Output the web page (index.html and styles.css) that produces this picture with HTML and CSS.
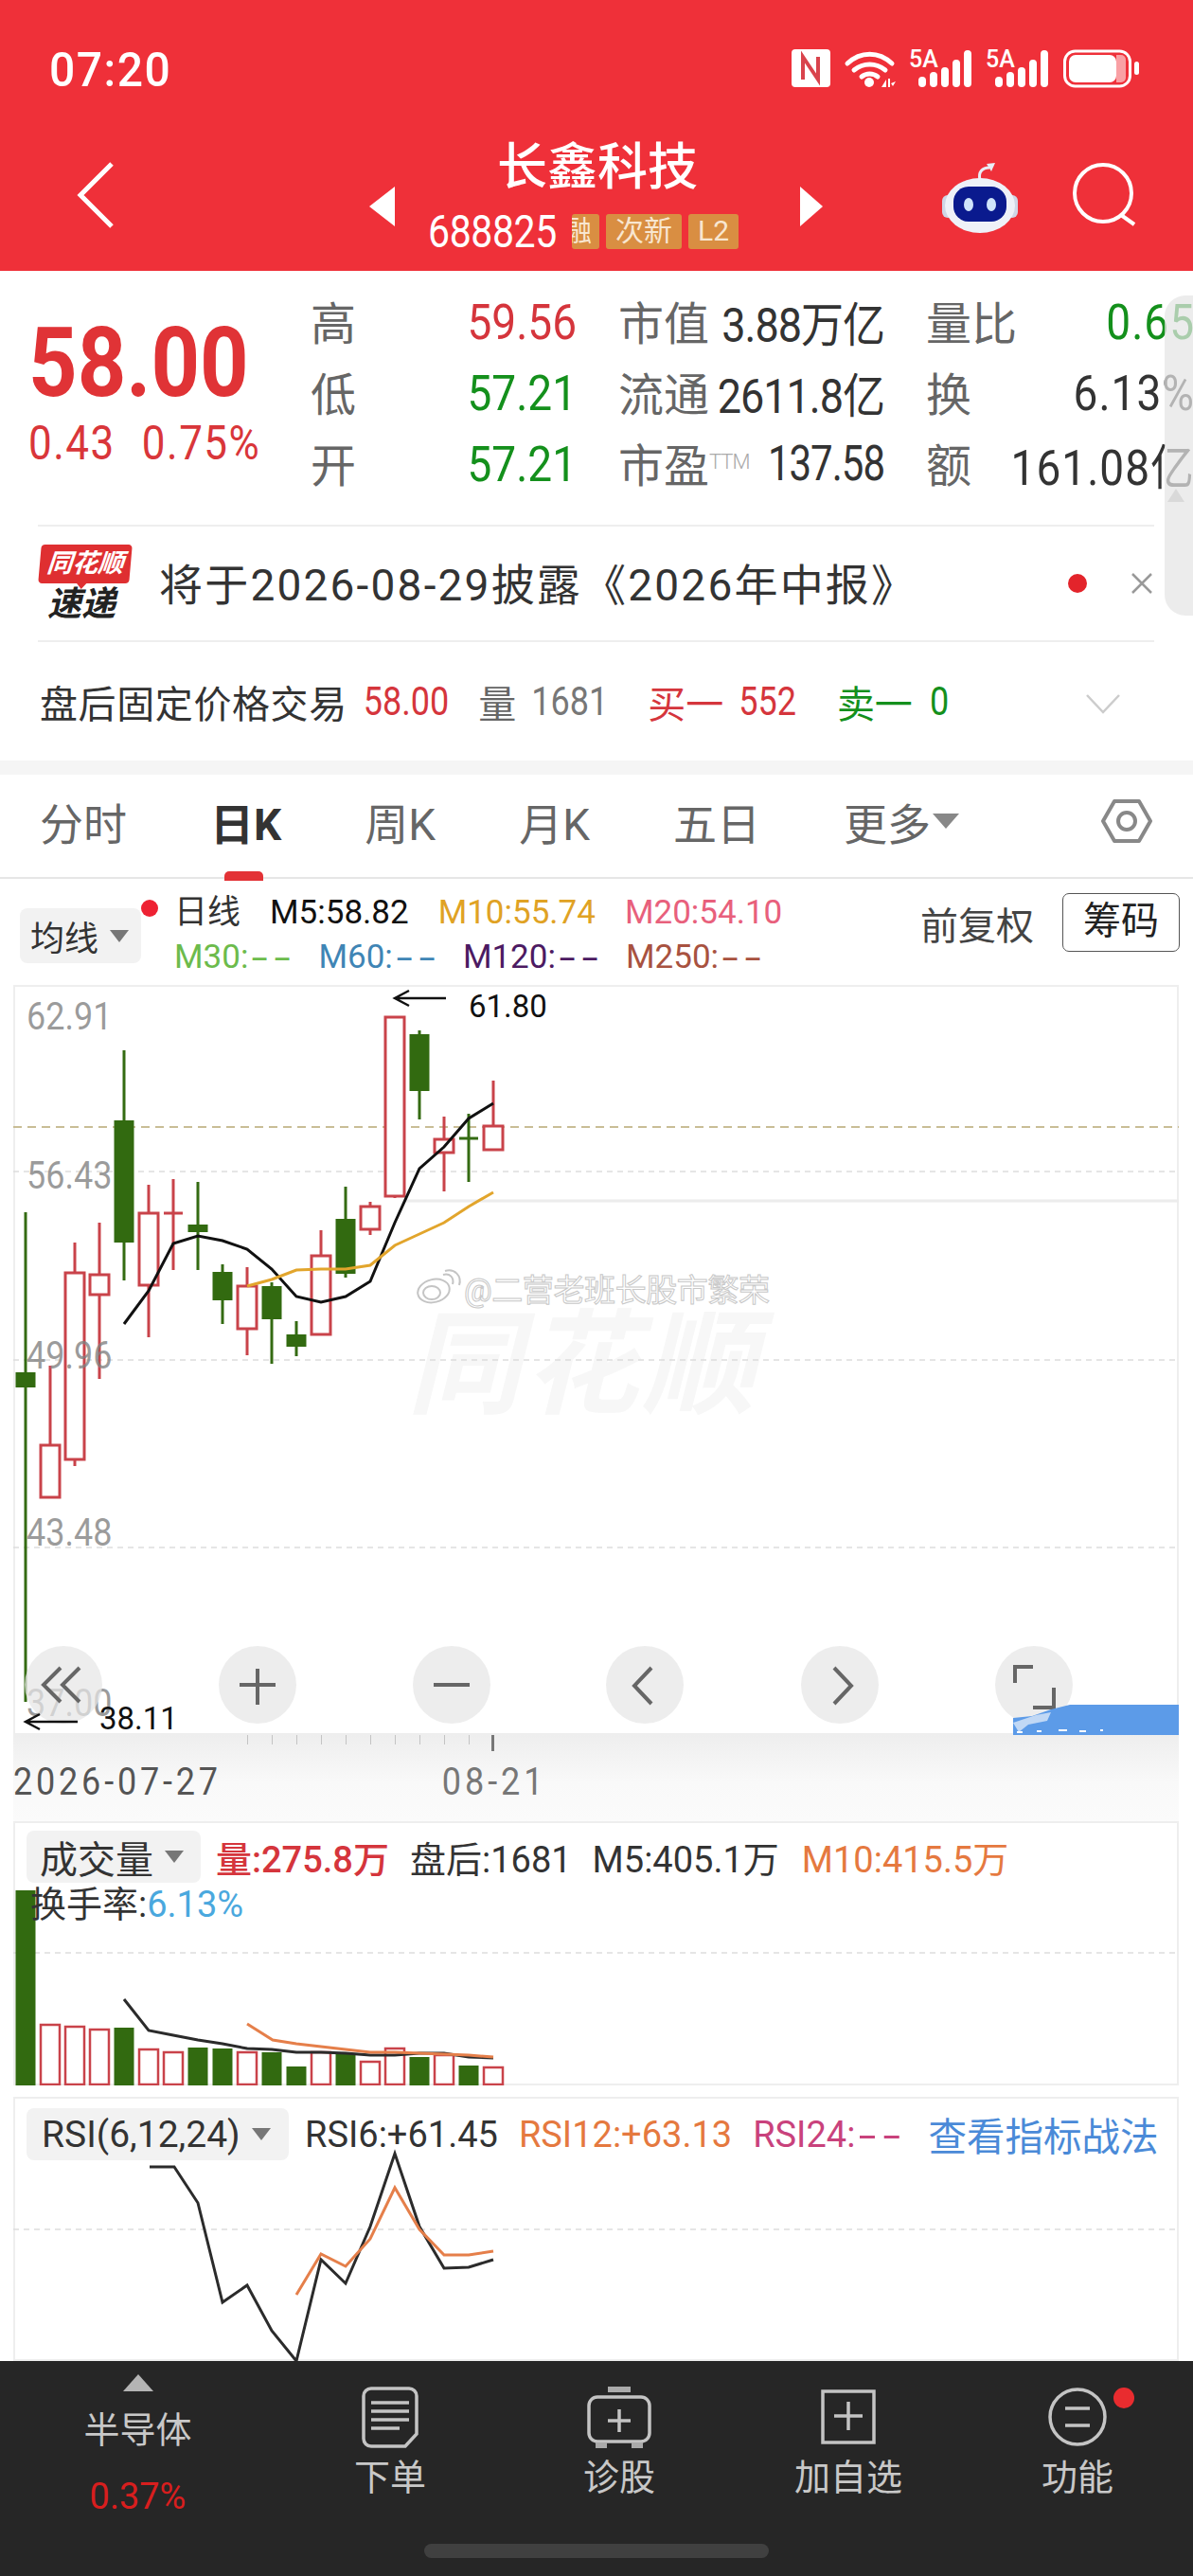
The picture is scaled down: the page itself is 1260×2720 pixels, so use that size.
FILE: index.html
```html
<!DOCTYPE html>
<html lang="zh-CN">
<head>
  <meta charset="UTF-8">
  <title>长鑫科技 688825</title>
  <link rel="stylesheet" href="styles.css">
</head>
<body>
<div class="phone">

  <header class="top">
    <div class="status">
      <span class="clock">07:20</span>
      <svg class="status-icons" viewBox="836 50 370 50" width="370" height="50">
        <rect x="836" y="54" width="41" height="40" rx="4" fill="#fff"/>
        <path d="M848 86V62l16 24V62" fill="none" stroke="#d9434c" stroke-width="4"/>
        <g fill="none" stroke="#fff" stroke-width="5" stroke-linecap="round">
          <path d="M895 69c14-13 33-13 47 0"/>
          <path d="M902 76c10-8 23-8 33 0"/>
          <path d="M910 83c5-4 12-4 17 0"/>
        </g>
        <circle cx="918" cy="89" r="5" fill="#fff"/>
        <path d="M931 94l5-8v8zM938 85h2v9h-2zM941 90l5-2-3 5z" fill="#fff"/>
        <text x="960" y="73" class="net">5A</text>
        <text x="1041" y="73" class="net">5A</text>
        <g stroke="#fff" stroke-width="8" stroke-linecap="round">
          <path d="M974 87v3M986 82v8M998 77v13M1010 69v21M1022 59v31"/>
          <path d="M1055 87v3M1067 82v8M1079 77v13M1091 69v21M1103 59v31"/>
        </g>
        <rect x="1124.500" y="56" width="69" height="37" rx="11" fill="none" stroke="#fff" stroke-width="3"/>
        <rect x="1129" y="60" width="50" height="29" rx="7" fill="#fff"/>
        <path d="M1179 60h5a5 5 0 0 1 5 5v19a5 5 0 0 1-5 5h-5z" fill="#f9a0a4"/>
        <rect x="1198" y="67" width="5" height="14" rx="2.500" fill="#fff"/>
      </svg>
    </div>
    <div class="nav">
      <svg class="nav-back" viewBox="0 0 44 72" width="44" height="72">
        <path d="M38 3L5 36l33 33" fill="none" stroke="#fff" stroke-width="5"/>
      </svg>
      <div class="nav-center">
        <i class="arrow-left"></i>
        <div class="stock">
          <div class="stock-name">长鑫科技</div>
          <div class="stock-code">
            <span class="code">688825</span>
            <span class="tag tag-cut"><b>融</b></span>
            <span class="tag">次新</span>
            <span class="tag">L2</span>
          </div>
        </div>
        <i class="arrow-right"></i>
      </div>
      <div class="nav-right">
        <svg viewBox="993 168 84 76" width="84" height="76">
          <path d="M1034 188c-2-8 2-13 10-13" fill="none" stroke="#e9edf6" stroke-width="3"/>
          <path d="M1050 170l-9 1 5 8z" fill="#e9edf6"/>
          <rect x="994" y="204" width="12" height="24" rx="6" fill="#cfd6e6"/>
          <rect x="1062" y="204" width="12" height="24" rx="6" fill="#cfd6e6"/>
          <ellipse cx="1034" cy="215" rx="37" ry="29" fill="#eef1f8"/>
          <rect x="1006" y="195" width="56" height="37" rx="16" fill="#0a1a8e"/>
          <ellipse cx="1022" cy="214" rx="5" ry="7" fill="#cfe4fb"/>
          <ellipse cx="1046" cy="214" rx="5" ry="7" fill="#cfe4fb"/>
        </svg>
        <svg viewBox="1130 172 70 70" width="70" height="70">
          <circle cx="1164" cy="206" r="30" fill="none" stroke="#fff" stroke-width="4"/>
          <path d="M1183 229l14 10" stroke="#fff" stroke-width="4"/>
        </svg>
      </div>
    </div>
  </header>

  <section class="quote">
    <div class="price-box">
      <div class="price">58.00</div>
      <div class="change"><span>0.43</span><span>0.75%</span></div>
    </div>
    <div class="stats">
      <div class="stat"><span class="stat-key">高</span><span class="stat-val red">59.56</span></div>
      <div class="stat"><span class="stat-key">市值</span><span class="stat-val">3.88万亿</span></div>
      <div class="stat"><span class="stat-key">量比</span><span class="stat-val green">0.65</span></div>
      <div class="stat"><span class="stat-key">低</span><span class="stat-val green">57.21</span></div>
      <div class="stat"><span class="stat-key">流通</span><span class="stat-val">2611.8亿</span></div>
      <div class="stat"><span class="stat-key">换</span><span class="stat-val">6.13%</span></div>
      <div class="stat"><span class="stat-key">开</span><span class="stat-val green">57.21</span></div>
      <div class="stat"><span class="stat-key">市盈<sup class="ttm">TTM</sup></span><span class="stat-val">137.58</span></div>
      <div class="stat"><span class="stat-key">额</span><span class="stat-val">161.08亿</span></div>
    </div>
  </section>

  <section class="notice">
    <div class="brand">
      <div class="brand-top">同花顺</div>
      <div class="brand-sub">速递</div>
    </div>
    <div class="notice-text">将于2026-08-29披露《2026年中报》</div>
    <i class="notice-dot"></i>
    <svg class="notice-close" viewBox="0 0 26 26" width="26" height="26">
      <path d="M3 3l20 20M23 3L3 23" stroke="#999" stroke-width="2.500"/>
    </svg>
  </section>

  <section class="after-hours">
    <span class="ah-title">盘后固定价格交易</span>
    <span class="ah-num red">58.00</span>
    <span class="ah-key">量</span>
    <span class="ah-num gray">1681</span>
    <span class="ah-buy red">买一</span>
    <span class="ah-num red">552</span>
    <span class="ah-sell green">卖一</span>
    <span class="ah-num green">0</span>
    <svg class="ah-more" viewBox="0 0 38 22" width="38" height="22">
      <path d="M2 2l17 18L36 2" fill="none" stroke="#ccc" stroke-width="2.500"/>
    </svg>
  </section>

  <div class="band"></div>

  <nav class="tabs">
    <span class="tab">分时</span>
    <span class="tab active">日K</span>
    <span class="tab">周K</span>
    <span class="tab">月K</span>
    <span class="tab">五日</span>
    <span class="tab">更多<i class="tab-caret"></i></span>
    <svg class="tab-gear" viewBox="0 0 54 48" width="54" height="48">
      <path d="M14 3h26l12 21-12 21H14L2 24z" fill="none" stroke="#888" stroke-width="4" stroke-linejoin="round"/>
      <circle cx="27" cy="24" r="9" fill="none" stroke="#888" stroke-width="4"/>
    </svg>
  </nav>

  <div class="legend">
    <div class="pick pick-ma">均线<i class="caret"></i></div>
    <i class="legend-dot"></i>
    <div class="ma-lines">
      <div class="ma-row">
        <span class="ma-day">日线</span>
        <span class="c-m5">M5:58.82</span>
        <span class="c-m10">M10:55.74</span>
        <span class="c-m20">M20:54.10</span>
      </div>
      <div class="ma-row">
        <span class="c-m30">M30:<span class="dash">--</span></span>
        <span class="c-m60">M60:<span class="dash">--</span></span>
        <span class="c-m120">M120:<span class="dash">--</span></span>
        <span class="c-m250">M250:<span class="dash">--</span></span>
      </div>
    </div>
    <span class="adjust">前复权</span>
    <span class="chips">筹码</span>
  </div>

  <div class="panel panel-k">
    <svg class="plot" viewBox="14 1039 1231 792" width="1231" height="792">
      <text x="430" y="1482" class="wm-big">同花顺</text>

      <path d="M14 1189H1245" class="grid-last"/>
      <path d="M14 1236H1245M14 1435H1245M14 1633H1245" class="grid"/>
      <path d="M428 1267H1245" stroke="#ececec" stroke-width="3"/>

      <path class="wick-up" d="M53 1441V1580M79 1311V1547M105 1290V1455M157 1250V1411M183 1244V1340M261 1337V1430M339 1298V1408M391 1268V1303M417 1073V1264M469 1178V1257M521 1140V1213M173 1280H193"/>
      <path class="wick-down" d="M27 1279V1796M131 1108V1351M209 1247V1340M235 1334V1397M287 1353V1439M313 1394V1431M365 1252V1348M443 1087V1181M495 1175V1247M485 1201H505"/>

      <g class="body-up">
        <rect x="43" y="1525" width="20" height="55"/>
        <rect x="69" y="1343" width="20" height="197"/>
        <rect x="95" y="1345" width="20" height="21"/>
        <rect x="147" y="1280" width="20" height="76"/>
        <rect x="251" y="1357" width="20" height="45"/>
        <rect x="329" y="1325" width="20" height="83"/>
        <rect x="381" y="1273" width="20" height="24"/>
        <rect x="407" y="1073" width="20" height="189"/>
        <rect x="459" y="1202" width="20" height="14"/>
        <rect x="511" y="1188" width="20" height="25"/>
      </g>
      <g class="body-down">
        <rect x="16.500" y="1448" width="21" height="16"/>
        <rect x="120.500" y="1182" width="21" height="129"/>
        <rect x="198.500" y="1292" width="21" height="8"/>
        <rect x="224.500" y="1342" width="21" height="30"/>
        <rect x="276.500" y="1357" width="21" height="35"/>
        <rect x="302.500" y="1408" width="21" height="13"/>
        <rect x="354.500" y="1286" width="21" height="58"/>
        <rect x="432.500" y="1091" width="21" height="60"/>
      </g>

      <text x="28" y="1087" class="axis-y">62.91</text>
      <text x="28" y="1255" class="axis-y">56.43</text>
      <text x="28" y="1445" class="axis-y">49.96</text>
      <text x="28" y="1632" class="axis-y">43.48</text>
      <text x="28" y="1812" class="axis-y">37.00</text>

      <polyline class="line-k" points="131,1397 157,1362 183,1312 209,1304 235,1309 261,1318 287,1339 313,1368 339,1374 365,1368 391,1352 417,1290 443,1233 469,1210 495,1180 521,1164"/>
      <polyline class="line-m10" points="261,1357 287,1350 313,1340 339,1339 365,1339 391,1335 417,1314 443,1302 469,1290 495,1273 521,1258"/>

      <path d="M471 1053H418m14-8l-15 8 15 8" class="pointer"/>
      <text x="495" y="1073" class="mark">61.80</text>

      <g class="wm-mark">
        <ellipse cx="458" cy="1362" rx="17" ry="12" transform="rotate(-14 458 1362)"/>
        <ellipse cx="456" cy="1364" rx="9" ry="7"/>
        <path d="M468 1345c7-2 12 3 10 10M470 1341c10-3 18 5 15 15"/>
      </g>
      <text x="490" y="1373" class="wm-text">@二营老班长股市繁荣</text>

      <g class="zoom-btn">
        <circle cx="67" cy="1778" r="41"/>
        <circle cx="272" cy="1778" r="41"/>
        <circle cx="477" cy="1778" r="41"/>
        <circle cx="681" cy="1778" r="41"/>
        <circle cx="887" cy="1778" r="41"/>
        <circle cx="1092" cy="1778" r="41"/>
      </g>
      <g class="zoom-ico">
        <path d="M64 1760l-18 18 18 18M84 1760l-18 18 18 18"/>
        <path d="M272 1761v38M253 1778h38"/>
        <path d="M458 1778h38"/>
        <path d="M688 1760l-18 19 18 19"/>
        <path d="M881 1760l18 19-18 19"/>
        <path d="M1072 1776v-17h19M1113 1781v21h-22"/>
      </g>

      <path d="M82 1817H28m14-8l-15 8 15 8" class="pointer"/>
      <text x="105" y="1825" class="mark">38.11</text>

      <path class="patch" d="M1070 1831v-18l20-2 20-7 20-5h116v32z"/>
      <path d="M1070 1818l24-8 16-3-4 9-20 4-10 8z" fill="#dbe7f7" opacity=".8"/>
      <path d="M1074 1828h6M1095 1827h5M1118 1826h9M1140 1827h7M1162 1826h3" stroke="#fff" stroke-width="2"/>
    </svg>
  </div>

  <div class="time-axis">
    <i class="ticks"></i>
    <i class="tick-major"></i>
    <span class="date-start">2026-07-27</span>
    <span class="date-end">08-21</span>
  </div>

  <div class="panel panel-vol">
    <svg class="plot" viewBox="14 1922 1231 279" width="1231" height="279">
      <path d="M14 2061H1245" class="grid"/>
      <g class="body-down">
        <rect x="16.500" y="1995" width="21" height="206"/>
        <rect x="120.500" y="2140" width="21" height="61"/>
        <rect x="198.500" y="2161" width="21" height="40"/>
        <rect x="224.500" y="2162" width="21" height="39"/>
        <rect x="276.500" y="2166" width="21" height="35"/>
        <rect x="302.500" y="2181" width="21" height="20"/>
        <rect x="354.500" y="2168" width="21" height="33"/>
        <rect x="432.500" y="2171" width="21" height="30"/>
        <rect x="484.500" y="2180" width="21" height="21"/>
      </g>
      <g class="body-up thin">
        <rect x="43" y="2137" width="20" height="63"/>
        <rect x="69" y="2139" width="20" height="61"/>
        <rect x="95" y="2142" width="20" height="58"/>
        <rect x="147" y="2163" width="20" height="37"/>
        <rect x="173" y="2166" width="20" height="34"/>
        <rect x="251" y="2166" width="20" height="34"/>
        <rect x="329" y="2166" width="20" height="34"/>
        <rect x="381" y="2176" width="20" height="24"/>
        <rect x="407" y="2162" width="20" height="38"/>
        <rect x="459" y="2169" width="20" height="31"/>
        <rect x="511" y="2182" width="20" height="18"/>
      </g>
      <polyline class="line-dark" points="131,2110 157,2143 183,2148 209,2153 235,2157 261,2162 287,2163 313,2166 339,2166 365,2167 391,2169 417,2169 443,2167 469,2167 495,2171 521,2172"/>
      <polyline class="line-orange" points="261,2136 288,2153 313,2157 339,2160 365,2163 391,2166 417,2166 443,2167 469,2168 495,2169 521,2171"/>
    </svg>
    <div class="panel-head">
      <div class="pick pick-vol">成交量<i class="caret"></i></div>
      <span class="red vol-now">量:275.8万</span>
      <span>盘后:1681</span>
      <span>M5:405.1万</span>
      <span class="c-orange vol-m10">M10:415.5万</span>
    </div>
    <div class="turnover">换手率:<span class="c-blue">6.13%</span></div>
  </div>

  <div class="panel panel-rsi">
    <svg class="plot" viewBox="14 2213 1231 279" width="1231" height="279">
      <path d="M14 2353H1245" class="grid"/>
      <polyline class="line-dark" points="158,2287 184,2287 209,2325 235,2430 261,2412 287,2460 313,2492 339,2385 365,2410 391,2350 417,2273 443,2350 469,2394 495,2393 521,2385"/>
      <polyline class="line-orange" points="313,2422 339,2379 365,2392 391,2363 417,2309 443,2353 469,2380 495,2380 521,2376"/>
    </svg>
    <div class="panel-head">
      <div class="pick pick-rsi">RSI(6,12,24)<i class="caret"></i></div>
      <span class="rsi-6">RSI6:+61.45</span>
      <span class="c-orange">RSI12:+63.13</span>
      <span class="c-rose">RSI24:<span class="dash">--</span></span>
      <span class="rsi-link">查看指标战法</span>
    </div>
  </div>

  <footer class="bottom">
    <div class="bottom-items">
      <div class="sector">
        <i class="sector-up"></i>
        <span class="sector-name">半导体</span>
        <span class="sector-pct">0.37%</span>
      </div>
      <div class="act">
        <svg viewBox="0 0 60 66" width="60" height="66">
          <path d="M10 2h40a8 8 0 0 1 8 8v40L46 63H10a8 8 0 0 1-8-8V10a8 8 0 0 1 8-8z" class="ico"/>
          <path d="M10 17h40M10 26h40M10 35h40M10 44h30" class="ico"/>
        </svg>
        <span>下单</span>
      </div>
      <div class="act">
        <svg viewBox="0 0 68 66" width="68" height="66">
          <path d="M22 3h24" class="ico ico-bar"/>
          <rect x="2" y="11" width="64" height="47" rx="9" class="ico"/>
          <path d="M34 24v24M22 36h24" class="ico"/>
          <path d="M9 62h12M47 62h12" class="ico ico-bar"/>
        </svg>
        <span>诊股</span>
      </div>
      <div class="act">
        <svg viewBox="0 0 60 66" width="60" height="66">
          <rect x="3" y="5" width="54" height="54" class="ico"/>
          <path d="M30 16v30M15 31h30" class="ico"/>
        </svg>
        <span>加自选</span>
      </div>
      <div class="act act-dot">
        <svg viewBox="0 0 64 66" width="64" height="66">
          <circle cx="32" cy="32" r="29" class="ico"/>
          <path d="M19 23h26M19 41h26" class="ico"/>
        </svg>
        <i class="act-badge"></i>
        <span>功能</span>
      </div>
    </div>
    <div class="home-bar"></div>
  </footer>

  <div class="side-handle"><i></i></div>
</div>
</body>
</html>
```

FILE: styles.css
```css
* {
  box-sizing: border-box;
}

body {
  margin: 0;
  background-color: #fff;
  font-family: Roboto, "Noto Sans CJK SC", sans-serif;
}

i {
  display: block;
}

.phone {
  position: relative;
  width: 1260px;
  height: 2720px;
  overflow: hidden;
  background-color: #fff;
  color: #333;
}

.red { color: #d5353c; }
.green { color: #14901c; }
.gray { color: #777; }

/* header */
.top {
  height: 286px;
  background-color: #ef3039;
  color: #fff;
}

.status {
  display: flex;
  justify-content: space-between;
  align-items: center;
  height: 146px;
  padding: 0 54px 0 52px;
}

.clock {
  font-size: 48px;
  font-weight: 500;
  letter-spacing: 1.5px;
  transform: scaleY(1.06);
}

.status-icons .net {
  fill: #fff;
  font-size: 25px;
  font-weight: 500;
}

.nav {
  display: grid;
  grid-template-columns: 390px 479px 1fr;
  height: 140px;
}

.nav-back {
  margin: 24px 0 0 80px;
}

.nav-center {
  display: flex;
  align-items: center;
  height: 122px;
}

.arrow-left,
.arrow-right {
  width: 0;
  height: 0;
  border-top: 21px solid transparent;
  border-bottom: 21px solid transparent;
  margin-top: 22px;
}

.arrow-left { border-right: 27px solid #fff; }
.arrow-right { border-left: 24px solid #fff; }

.stock {
  width: 428px;
}

.stock-name {
  height: 74px;
  font-size: 53px;
  font-weight: 500;
  line-height: 62px;
  text-align: center;
}

.stock-code {
  display: flex;
  align-items: center;
  gap: 7px;
  padding-left: 35px;
}

.code {
  width: 145px;
  font-size: 41px;
  letter-spacing: -.4px;
  transform: scaleY(1.18);
}

.tag {
  height: 37px;
  padding: 0 10px;
  background-color: #d98e42;
  border-radius: 3px;
  color: #f8e6d0;
  font-size: 30px;
  line-height: 36px;
}

.tag-cut {
  position: relative;
  width: 29px;
  overflow: hidden;
  padding: 0;
}

.tag-cut b {
  position: absolute;
  right: 8px;
  font-weight: 400;
}

.nav-right {
  display: flex;
  gap: 53px;
  padding: 24px 0 0 125px;
  align-items: flex-start;
}

/* quote block */
.quote {
  display: flex;
  height: 268px;
  overflow: hidden;
}

.price-box {
  width: 328px;
  flex: none;
  padding: 44px 0 0 30px;
  color: #d9363a;
}

.price {
  font-size: 90px;
  font-weight: 700;
  line-height: 108px;
  color: #e03336;
  transform: scaleY(1.13);
}

.change {
  display: flex;
  gap: 28px;
  font-size: 44px;
  line-height: 56px;
  letter-spacing: 1.5px;
  margin-top: 2px;
}

.change span {
  transform: scaleY(1.15);
}

.stats {
  display: grid;
  grid-template-columns: 325px 325px 284px;
  grid-auto-rows: 75px;
  padding-top: 14px;
  flex: none;
}

.stat {
  display: flex;
  justify-content: space-between;
  align-items: center;
  padding-right: 44px;
}

.stat:nth-child(3n) {
  padding-right: 0;
}

.stat-key {
  font-size: 48px;
  color: #666;
  white-space: nowrap;
}

.ttm {
  font-size: 22px;
  font-weight: 300;
  color: #aaa;
  vertical-align: 14px;
  line-height: 0;
  letter-spacing: -1px;
}

.stat-val {
  margin-top: 4px;
  font-size: 46px;
  white-space: nowrap;
  transform: scaleY(1.12);
}

.stat:nth-child(3n) .stat-val {
  letter-spacing: 1px;
}

.stat:nth-child(3n+2) .stat-val {
  font-size: 45px;
  letter-spacing: -1px;
}

.stat:nth-child(8) .stat-val {
  font-size: 42px;
  transform: scaleY(1.22);
}

.side-handle {
  position: absolute;
  top: 312px;
  right: 0;
  width: 30px;
  height: 338px;
  background-color: rgba(228, 228, 228, .72);
  border-radius: 22px 0 0 22px;
}

.side-handle i {
  position: absolute;
  top: 204px;
  left: 3px;
  width: 0;
  height: 0;
  border-left: 9px solid transparent;
  border-right: 9px solid transparent;
  border-bottom: 14px solid #d9d9d9;
}

/* notice */
.notice {
  display: flex;
  align-items: center;
  height: 124px;
  margin: 0 41px 0 40px;
  border-top: 2px solid #eee;
  border-bottom: 2px solid #eee;
}

.brand {
  width: 128px;
  padding-left: 2px;
  flex: none;
}

.brand-top {
  position: relative;
  width: 96px;
  height: 41px;
  background-color: #df2f31;
  border-radius: 4px;
  color: #fff;
  font-size: 27px;
  font-weight: 700;
  font-style: italic;
  line-height: 40px;
  text-align: center;
  transform: skewX(-5deg);
}

.brand-top::after {
  content: "";
  position: absolute;
  left: 40px;
  bottom: -6px;
  border-left: 6px solid transparent;
  border-right: 6px solid transparent;
  border-top: 7px solid #df2f31;
}

.brand-sub {
  font-size: 36px;
  font-weight: 700;
  font-style: italic;
  line-height: 40px;
  color: #222;
  padding: 2px 0 0 8px;
  white-space: nowrap;
}

.notice-text {
  font-size: 46px;
  letter-spacing: 2.2px;
  flex: 1;
  white-space: nowrap;
  padding-bottom: 4px;
}

.notice-dot {
  width: 20px;
  height: 20px;
  border-radius: 50%;
  background-color: #e3242b;
  margin-right: 45px;
}

/* after hours row */
.after-hours {
  display: flex;
  align-items: center;
  height: 122px;
  padding: 4px 0 0 42px;
  font-size: 40px;
}

.ah-title {
  margin-right: 17px;
  letter-spacing: .6px;
}

.ah-num {
  font-size: 36px;
  transform: scaleY(1.2);
}

.ah-key {
  margin: 0 16px 0 31px;
  color: #666;
}

.ah-buy {
  margin: 0 16px 0 42px;
}

.ah-sell {
  margin: 0 18px 0 43px;
}

.ah-more {
  position: absolute;
  left: 1146px;
  top: 732px;
}

.band {
  height: 15px;
  background-color: #f5f5f5;
  margin-top: 3px;
  margin-bottom: -4px;
}

/* tabs */
.tabs {
  display: flex;
  align-items: center;
  height: 114px;
  padding: 0 43px 6px 42px;
  gap: 88px;
  border-bottom: 2px solid #e6e6e6;
  font-size: 46px;
  color: #666;
}

.tab {
  position: relative;
  display: flex;
  align-items: center;
}

.tab.active {
  color: #333;
  font-weight: 700;
}

.tab.active::after {
  content: "";
  position: absolute;
  left: 15px;
  bottom: -30px;
  width: 41px;
  height: 10px;
  background-color: #e33236;
  border-radius: 5px 5px 0 0;
}

.tab-caret {
  margin-left: 2px;
  border-left: 14px solid transparent;
  border-right: 14px solid transparent;
  border-top: 16px solid #888;
}

.tab-gear {
  margin-left: auto;
}

/* MA legend */
.legend {
  position: relative;
  display: flex;
  align-items: flex-start;
  height: 112px;
  padding: 12px 14px 0 21px;
  font-size: 35px;
}

.pick {
  display: flex;
  align-items: center;
  background-color: #f2f2f2;
  border-radius: 8px;
  color: #333;
  flex: none;
}

.pick-ma {
  width: 128px;
  height: 58px;
  margin-top: 19px;
  padding-left: 11px;
  font-size: 36px;
}

.caret {
  border-left: 10px solid transparent;
  border-right: 10px solid transparent;
  border-top: 13px solid #777;
  margin-left: 12px;
}

.legend-dot {
  position: absolute;
  left: 149px;
  top: 22px;
  width: 18px;
  height: 18px;
  background-color: #ee2233;
  border-radius: 50%;
}

.ma-lines {
  margin-left: 35px;
  line-height: 47px;
}

.ma-row {
  display: flex;
  gap: 31px;
  white-space: nowrap;
}

.dash {
  display: inline-block;
  margin: 0 11px 0 2px;
  font-family: "DejaVu Sans", sans-serif;
  letter-spacing: 2.4px;
  transform-origin: left;
  transform: scaleX(1.6);
}

.ma-day { color: #333; }
.c-m5 { color: #111; }
.c-m10 { color: #e0a224; }
.c-m20 { color: #e8607c; }
.c-m30 { color: #6cbb4c; }
.c-m60 { color: #3f85b5; }
.c-m120 { color: #4c1a62; }
.c-m250 { color: #a85240; }

.adjust {
  margin: 6px 30px 0 auto;
  font-size: 40px;
  color: #444;
}

.chips {
  width: 124px;
  height: 62px;
  margin-top: 3px;
  border: 1px solid #555;
  border-radius: 7px;
  font-size: 40px;
  line-height: 58px;
  text-align: center;
  color: #222;
}

/* chart panels */
.panel {
  position: relative;
  width: 1231px;
  margin-left: 14px;
  box-shadow: inset 0 0 0 2px #eee;
}

.panel-k { height: 792px; }
.panel-vol { height: 279px; }
.panel-rsi { height: 279px; margin-top: 12px; }

.plot {
  position: absolute;
  top: 0;
  left: 0;
  display: block;
}

.grid {
  stroke: #ddd;
  stroke-width: 1.500;
  stroke-dasharray: 6 5;
}

.grid-last {
  stroke: #c9bd96;
  stroke-width: 2;
  stroke-dasharray: 9 6;
}

.axis-y {
  font-size: 36px;
  fill: #808080;
  fill-opacity: .78;
  transform-box: fill-box;
  transform-origin: left bottom;
  transform: scaleY(1.12);
}

.wick-up,
.wick-down {
  fill: none;
  stroke-width: 3;
}

.wick-up { stroke: #c9434a; }
.wick-down { stroke: #346b12; }

.body-up rect {
  fill: #fff;
  stroke: #c9434a;
  stroke-width: 3;
}

.body-up.thin rect {
  fill: none;
  stroke-width: 2.500;
}

.body-down rect {
  fill: #326a10;
}

.line-k,
.line-m10,
.line-dark,
.line-orange {
  fill: none;
  stroke-width: 3;
}

.line-k { stroke: #111; }
.line-m10 { stroke: #e2a52c; }
.line-dark { stroke: #2b2b2b; }
.line-orange { stroke: #e57f4a; }

.pointer {
  fill: none;
  stroke: #111;
  stroke-width: 2.500;
}

.mark {
  font-size: 33px;
  fill: #111;
}

.wm-big {
  font-size: 120px;
  font-weight: 700;
  font-style: italic;
  letter-spacing: 4px;
  fill: #f7f7f7;
}

.wm-text {
  font-size: 33px;
  fill: #fff;
  stroke: #c8c8c8;
  stroke-width: 1;
  letter-spacing: -.4px;
}

.wm-mark {
  fill: none;
  stroke: #c4c4c4;
  stroke-width: 2;
}

.zoom-btn circle {
  fill: #e6e6e6;
  fill-opacity: .72;
}

.zoom-ico path {
  fill: none;
  stroke: #666;
  stroke-width: 4;
}

.patch {
  fill: #5c9be8;
}

.time-axis {
  position: relative;
  height: 91px;
  width: 1231px;
  margin-left: 14px;
  padding-top: 27px;
  background: linear-gradient(#eee, #f9f9f9 55%, #fbfbfb);
  font-size: 36px;
  line-height: 44px;
}

.ticks {
  position: absolute;
  top: 0;
  left: 247px;
  width: 235px;
  height: 10px;
  background: repeating-linear-gradient(90deg, #c4c4c4 0 1px, transparent 1px 26px);
}

.tick-major {
  position: absolute;
  top: 0;
  left: 505px;
  width: 3px;
  height: 17px;
  background-color: #777;
}

.date-start,
.date-end {
  display: inline-block;
  transform: scaleY(1.14);
}

.date-start {
  letter-spacing: 3.800px;
  color: #555;
}

.date-end {
  margin-left: 224px;
  letter-spacing: 4px;
  color: #777;
}

.panel-head {
  position: relative;
  display: flex;
  align-items: center;
  gap: 22px;
  padding: 10px 0 0 14px;
  font-size: 38px;
  white-space: nowrap;
}

.pick-vol {
  width: 184px;
  height: 55px;
  padding-left: 14px;
  font-size: 40px;
}

.vol-now { margin-left: -6px; font-weight: 500; }
.vol-m10 { margin-left: 2px; }

.turnover {
  position: relative;
  margin: 1px 0 0 18px;
  font-size: 38px;
  line-height: 44px;
}

.c-blue { color: #4aa8de; }
.c-orange { color: #e5793f; }
.c-rose { color: #c9427c; }

.pick-rsi {
  width: 277px;
  height: 55px;
  padding-left: 16px;
  font-size: 39px;
}

.rsi-6 { margin-left: -5px; }

.rsi-link {
  margin-left: 10px;
  font-size: 40.500px;
  color: #4a8ad8;
}

/* bottom bar */
.bottom {
  position: relative;
  height: 228px;
  background-color: #262626;
  color: #c8c8c8;
}

.bottom-items {
  display: grid;
  grid-template-columns: 291px repeat(4, 242px);
  height: 193px;
}

.sector {
  display: flex;
  flex-direction: column;
  align-items: center;
  padding-top: 14px;
  font-size: 38px;
}

.sector-up {
  border-left: 16px solid transparent;
  border-right: 16px solid transparent;
  border-bottom: 18px solid #b4b4b4;
}

.sector-name {
  margin-top: 12px;
  line-height: 58px;
}

.sector-pct {
  margin-top: 19px;
  font-size: 38px;
  color: #d81e1e;
}

.act {
  position: relative;
  display: flex;
  flex-direction: column;
  align-items: center;
  padding-top: 27px;
  font-size: 38px;
  line-height: 60px;
}

.ico {
  fill: none;
  stroke: #c4c4c4;
  stroke-width: 3.500;
}

.ico-bar {
  stroke-width: 6;
  stroke: #aaa;
}

.act-badge {
  position: absolute;
  left: 159px;
  top: 28px;
  width: 22px;
  height: 22px;
  background-color: #e92c2f;
  border-radius: 50%;
}

.home-bar {
  width: 364px;
  height: 15px;
  margin: 0 auto;
  background-color: #404040;
  border-radius: 8px;
}
```
